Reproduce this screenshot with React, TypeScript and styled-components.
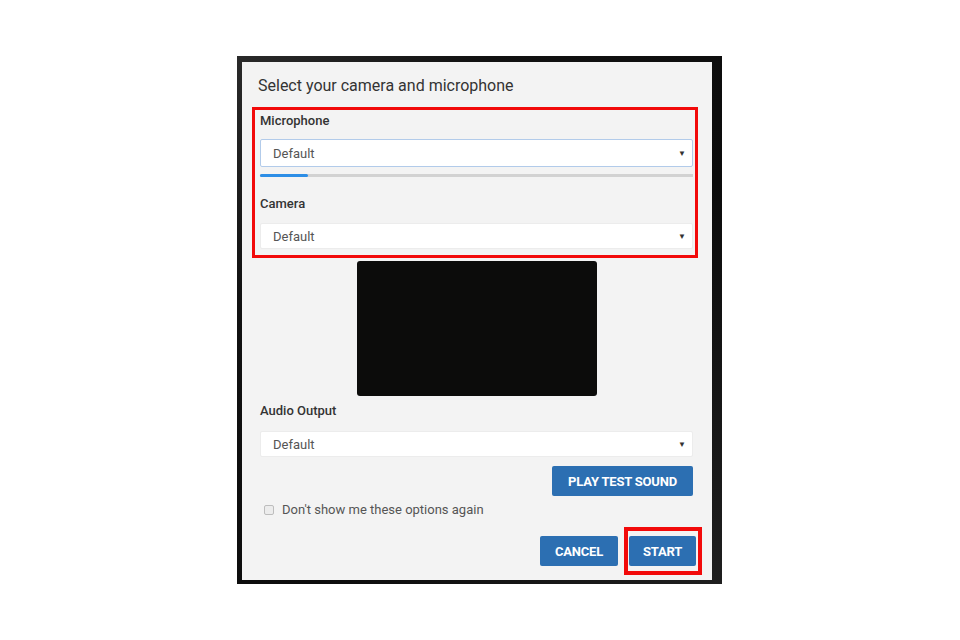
import React, { useState } from "react";
import styled, { createGlobalStyle } from "styled-components";

const GlobalStyle = createGlobalStyle`
  html, body {
    margin: 0;
    padding: 0;
    background: #ffffff;
    font-family: Roboto, "Liberation Sans", Arial, sans-serif;
  }
`;

const Page = styled.div`
  width: 960px;
  height: 640px;
  padding: 56px 0 0 237px;
  box-sizing: border-box;
`;

const Backdrop = styled.div`
  width: 485px;
  height: 528px;
  box-sizing: border-box;
  padding: 6px 10px 4px 5px;
  background: linear-gradient(135deg, #2a2a2a 0%, #111 25%, #0c0c0c 60%, #1f1f1f 100%);
`;

const Dialog = styled.div`
  width: 470px;
  height: 518px;
  box-sizing: border-box;
  padding: 0 19px 0 18px;
  background: #f3f3f3;
  display: flex;
  flex-direction: column;
`;

const Title = styled.h1`
  margin: 14px 0 0 -2px;
  font-size: 16px;
  line-height: 20px;
  font-weight: 400;
  color: #333;
`;

const Highlight = styled.div`
  margin: 11px -5px 0 -8px;
  padding: 3px 2px 6px 5px;
  border: 3px solid #f20a0a;
  display: flex;
  flex-direction: column;
`;

const Label = styled.label<{ $top?: number }>`
  display: block;
  margin-top: ${(p) => p.$top ?? 0}px;
  font-size: 13px;
  line-height: 16px;
  font-weight: 500;
  color: #333;
`;

const Select = styled.div<{ $focused?: boolean; $top: number }>`
  margin-top: ${(p) => p.$top}px;
  height: ${(p) => (p.$focused ? 28 : 26)}px;
  box-sizing: border-box;
  display: flex;
  align-items: center;
  justify-content: space-between;
  padding: 0 6px 0 12px;
  background: #fff;
  border: 1px solid ${(p) => (p.$focused ? "#b2cbea" : "#ececec")};
  border-radius: 2px;
  font-size: 13px;
  color: #555;
`;

const Caret = styled.span`
  font-size: 8px;
  color: #333;
`;

const Meter = styled.div`
  margin-top: 7px;
  height: 3px;
  background: #d2d2d2;
  display: flex;
`;

const MeterFill = styled.div`
  height: 100%;
  background: #2d8ee6;
  border-radius: 2px;
`;

const Preview = styled.div`
  margin: 3px auto 0;
  width: 240px;
  height: 135px;
  background: #0c0c0b;
  border-radius: 3px;
`;

const Button = styled.button`
  height: 30px;
  padding: 0 14px;
  border: none;
  border-radius: 2px;
  background: #2c6fb2;
  color: #fff;
  font-family: Roboto, "Liberation Sans", Arial, sans-serif;
  font-size: 13px;
  font-weight: 700;
  letter-spacing: -0.2px;
  text-transform: uppercase;
  cursor: pointer;
`;

const RightRow = styled.div<{ $top: number }>`
  margin-top: ${(p) => p.$top}px;
  display: flex;
  justify-content: flex-end;
  align-items: center;
`;

const TestButton = styled(Button)`
  width: 141px;
`;

const CheckRow = styled.label`
  margin-top: 6px;
  display: flex;
  align-items: center;
  gap: 8px;
  padding-left: 4px;
  font-size: 13px;
  line-height: 16px;
  color: #555;
`;

const Check = styled.span<{ $on: boolean }>`
  width: 10px;
  height: 10px;
  box-sizing: border-box;
  border: 1px solid #bdbdbd;
  border-radius: 2px;
  background: ${(p) => (p.$on ? "#2c6fb2" : "#ececec")};
`;

const Footer = styled(RightRow)`
  gap: 6px;
  margin-right: -9px;
`;

const CancelButton = styled(Button)`
  width: 78px;
`;

const StartHighlight = styled.div`
  border: 4px solid #f20a0a;
  padding: 5px 2px 5px 1px;
  display: flex;
`;

const StartButton = styled(Button)`
  width: 67px;
`;

export default function App() {
  const [skip, setSkip] = useState(false);

  return (
    <>
      <GlobalStyle />
      <Page>
        <Backdrop>
          <Dialog>
            <Title>Select your camera and microphone</Title>
            <Highlight>
              <Label>Microphone</Label>
              <Select $focused $top={10}>
                Default
                <Caret>▼</Caret>
              </Select>
              <Meter>
                <MeterFill style={{ width: 48 }} />
              </Meter>
              <Label $top={19}>Camera</Label>
              <Select $top={11}>
                Default
                <Caret>▼</Caret>
              </Select>
            </Highlight>
            <Preview />
            <Label $top={7}>Audio Output</Label>
            <Select $top={12}>
              Default
              <Caret>▼</Caret>
            </Select>
            <RightRow $top={9}>
              <TestButton>Play test sound</TestButton>
            </RightRow>
            <CheckRow onClick={() => setSkip(!skip)}>
              <Check $on={skip} />
              Don't show me these options again
            </CheckRow>
            <Footer $top={9}>
              <CancelButton>Cancel</CancelButton>
              <StartHighlight>
                <StartButton>Start</StartButton>
              </StartHighlight>
            </Footer>
          </Dialog>
        </Backdrop>
      </Page>
    </>
  );
}
